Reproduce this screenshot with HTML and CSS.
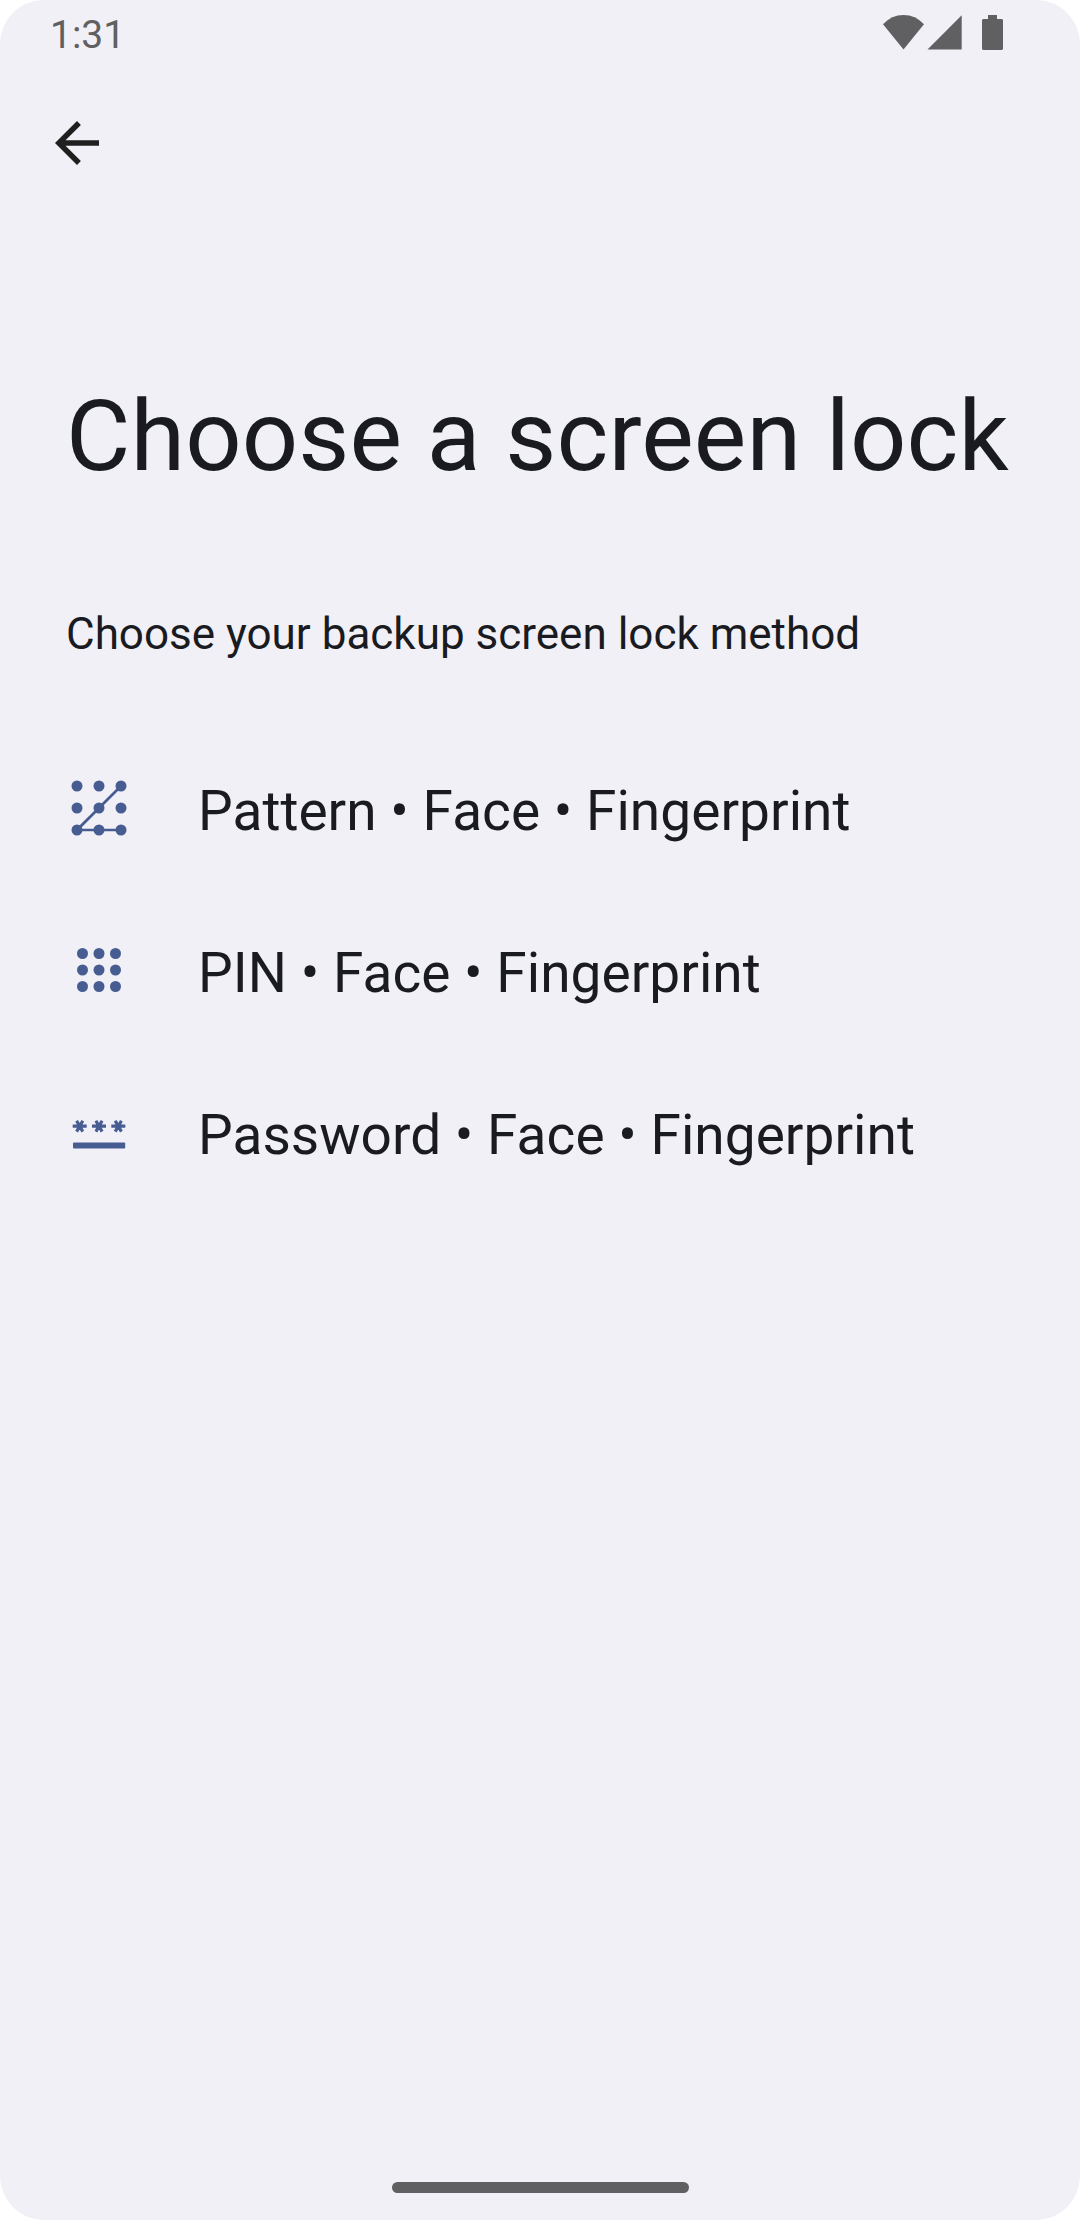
FILE: index.html
```html
<!DOCTYPE html>
<html lang="en">
<head>
<meta charset="utf-8">
<title>Choose a screen lock</title>
<link rel="stylesheet" href="styles.css">
</head>
<body>
<main class="screen">
  <header class="status">
    <span class="clock">1:31</span>
    <svg class="status-icons" width="140" height="66" viewBox="870 0 140 66">
      <path d="M883 24.3Q891.5 15 903.5 15T924 24.3L903.5 49.5Z"/>
      <path d="M961.7 15.3V49.6H927.5Z"/>
      <path d="M988 15H997V19H1002L1003 20V49L1002 50H983L982 49V20L983 19H988Z"/>
    </svg>
  </header>
  <nav class="toolbar">
    <svg class="back" width="66" height="66" viewBox="0 0 24 24"><path d="M20 11H7.83l5.59-5.59L12 4l-8 8 8 8 1.41-1.41L7.83 13H20v-2z"/></svg>
  </nav>
  <h1 class="title">Choose a screen lock</h1>
  <p class="description">Choose your backup screen lock method</p>
  <ul class="options">
    <li class="option">
      <svg class="icon" width="66" height="66" viewBox="0 0 66 66">
        <path class="stroke" d="M55 11L11 55H55" stroke-width="2.7"/>
        <circle cx="11" cy="11" r="5.5"/><circle cx="33" cy="11" r="5.5"/><circle cx="55" cy="11" r="5.5"/>
        <circle cx="11" cy="33" r="5.5"/><circle cx="33" cy="33" r="5.5"/><circle cx="55" cy="33" r="5.5"/>
        <circle cx="11" cy="55" r="5.5"/><circle cx="33" cy="55" r="5.5"/><circle cx="55" cy="55" r="5.5"/>
      </svg>
      <span class="label">Pattern • Face • Fingerprint</span>
    </li>
    <li class="option">
      <svg class="icon" width="66" height="66" viewBox="0 0 66 66">
        <circle cx="16.5" cy="16.5" r="5.5"/><circle cx="33" cy="16.5" r="5.5"/><circle cx="49.5" cy="16.5" r="5.5"/>
        <circle cx="16.5" cy="33" r="5.5"/><circle cx="33" cy="33" r="5.5"/><circle cx="49.5" cy="33" r="5.5"/>
        <circle cx="16.5" cy="49.5" r="5.5"/><circle cx="33" cy="49.5" r="5.5"/><circle cx="49.5" cy="49.5" r="5.5"/>
      </svg>
      <span class="label">PIN • Face • Fingerprint</span>
    </li>
    <li class="option">
      <svg class="icon" width="66" height="66" viewBox="0 0 66 66">
        <path class="stroke" stroke-width="3.2" d="M6.7 27.2h14M10.6 21.8l6.2 10.8M16.8 21.8l-6.2 10.8M26 27.2h14M29.9 21.8l6.2 10.8M36.1 21.8l-6.2 10.8M45.3 27.2h14M49.2 21.8l6.2 10.8M55.4 21.8l-6.2 10.8"/>
        <rect x="7" y="43.6" width="52.2" height="5.8" rx="1"/>
      </svg>
      <span class="label">Password • Face • Fingerprint</span>
    </li>
  </ul>
  <div class="home-bar"></div>
</main>
</body>
</html>
```

FILE: styles.css
```css
body {
  margin: 0;
  background: #fff;
  font-family: Roboto, sans-serif;
  color: #1a1b20;
}

.screen {
  box-sizing: border-box;
  height: 2220px;
  background: #f1f0f7;
  border-radius: 44px;
  display: flex;
  flex-direction: column;
}

.status {
  height: 66px;
  display: flex;
  justify-content: space-between;
  padding: 0 70px 0 50px;
}

.clock {
  padding-top: 2px;
  font-size: 39px;
  line-height: 66px;
  color: #606062;
}

.status-icons {
  fill: #606062;
}

.toolbar {
  box-sizing: border-box;
  height: 154px;
  padding: 44px 44px 0;
}

.back {
  display: block;
  fill: #1f1f1f;
}

.title {
  margin: 158px 66px 0;
  font-size: 99px;
  font-weight: 400;
  line-height: 116px;
  letter-spacing: 0.1px;
  white-space: nowrap;
}

.description {
  margin: 114px 66px 0;
  font-size: 44px;
  line-height: 52px;
}

.options {
  margin: 67px 0 0;
  padding: 0 66px;
  list-style: none;
}

.option {
  height: 162px;
  display: flex;
  align-items: center;
  gap: 66px;
}

.icon {
  fill: #475d92;
}

.stroke {
  fill: none;
  stroke: #475d92;
}

.label {
  padding-top: 6px;
  font-size: 55px;
  line-height: 64px;
  letter-spacing: 0.03px;
}

.home-bar {
  width: 297px;
  height: 11px;
  margin: auto auto 27.5px;
  border-radius: 6px;
  background: #606062;
}
```
